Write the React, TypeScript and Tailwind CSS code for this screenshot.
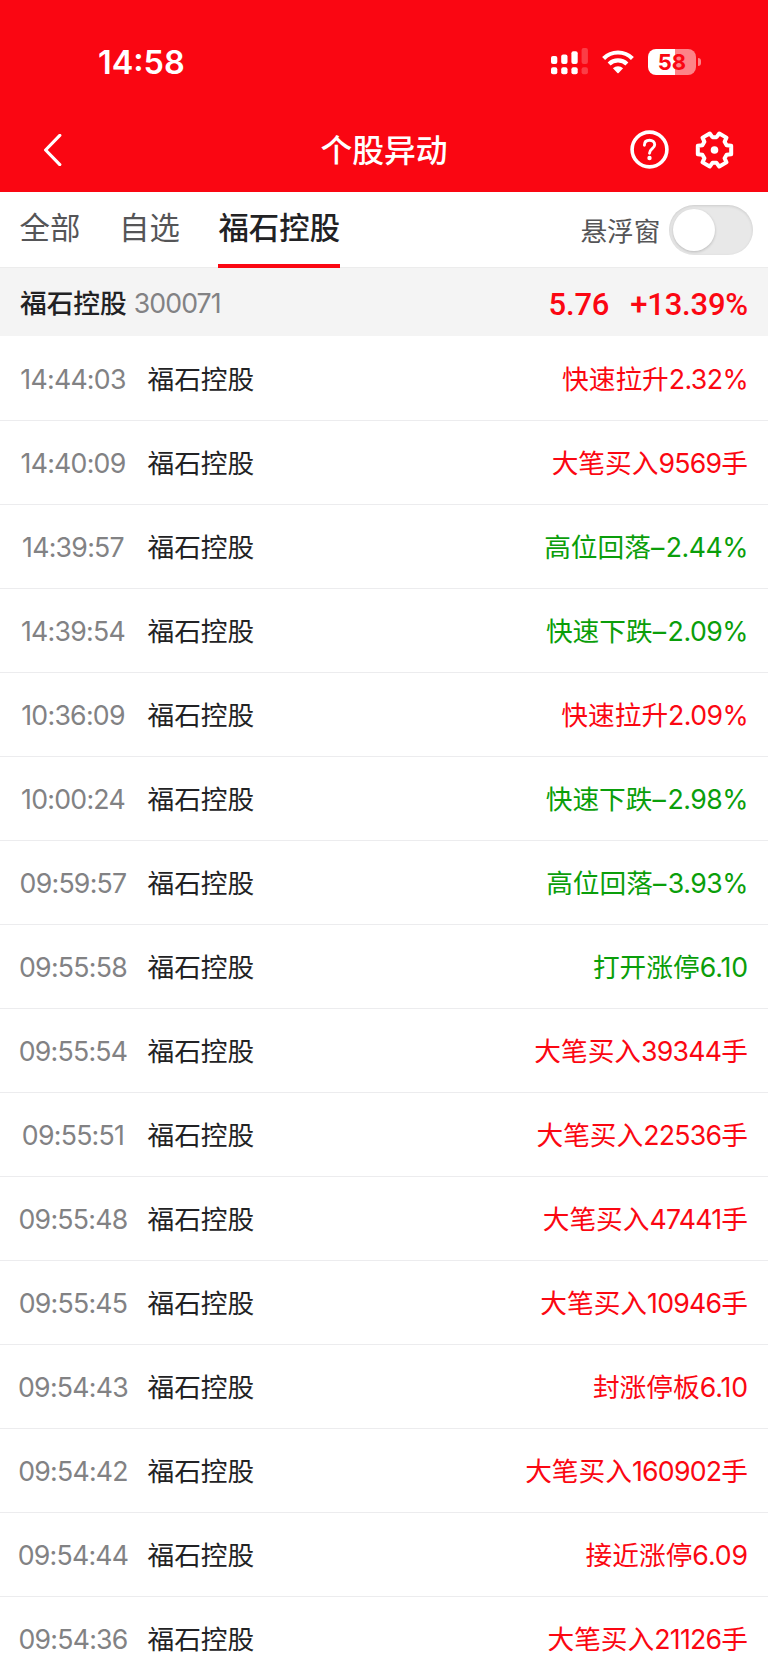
import React, { useState } from 'react';

type Trend = 'up' | 'down';

interface StockEvent {
    time: string;
    kind: string;
    value: string;
    unit?: string;
    trend: Trend;
}

const STOCK = { name: '福石控股', code: '300071', price: '5.76', change: '+13.39%' };

const EVENTS: StockEvent[] = [
    { time: '14:44:03', kind: '快速拉升', value: '2.32%', trend: 'up' },
    { time: '14:40:09', kind: '大笔买入', value: '9569', unit: '手', trend: 'up' },
    { time: '14:39:57', kind: '高位回落', value: '–2.44%', trend: 'down' },
    { time: '14:39:54', kind: '快速下跌', value: '–2.09%', trend: 'down' },
    { time: '10:36:09', kind: '快速拉升', value: '2.09%', trend: 'up' },
    { time: '10:00:24', kind: '快速下跌', value: '–2.98%', trend: 'down' },
    { time: '09:59:57', kind: '高位回落', value: '–3.93%', trend: 'down' },
    { time: '09:55:58', kind: '打开涨停', value: '6.10', trend: 'down' },
    { time: '09:55:54', kind: '大笔买入', value: '39344', unit: '手', trend: 'up' },
    { time: '09:55:51', kind: '大笔买入', value: '22536', unit: '手', trend: 'up' },
    { time: '09:55:48', kind: '大笔买入', value: '47441', unit: '手', trend: 'up' },
    { time: '09:55:45', kind: '大笔买入', value: '10946', unit: '手', trend: 'up' },
    { time: '09:54:43', kind: '封涨停板', value: '6.10', trend: 'up' },
    { time: '09:54:42', kind: '大笔买入', value: '160902', unit: '手', trend: 'up' },
    { time: '09:54:44', kind: '接近涨停', value: '6.09', trend: 'up' },
    { time: '09:54:36', kind: '大笔买入', value: '21126', unit: '手', trend: 'up' },
];

const TABS = ['全部', '自选', STOCK.name];

// Outline of the settings cog: six teeth, [radius, angle offset] around each one
const TOOTH = [[13, -21], [17.2, -14], [17.2, 14], [13, 21]];
const GEAR_POINTS = [0, 60, 120, 180, 240, 300]
    .flatMap((base) =>
        TOOTH.map(([r, offset]) => {
            const angle = ((base + offset) * Math.PI) / 180;
            return `${(19.5 + r * Math.cos(angle)).toFixed(2)},${(19 + r * Math.sin(angle)).toFixed(2)}`;
        })
    )
    .join(' ');

const SignalIcon = () => (
    <svg width="37" height="27" viewBox="0 0 37 27" fill="white">
        <rect x="0" y="8" width="6.3" height="8" rx="2" />
        <rect x="10.2" y="6.5" width="6.3" height="9.5" rx="2" />
        <rect x="20.4" y="3.2" width="6.3" height="12.8" rx="2" />
        <rect x="0" y="19.2" width="6.3" height="7" rx="2" />
        <rect x="10.2" y="19.2" width="6.3" height="7" rx="2" />
        <rect x="20.4" y="19.2" width="6.3" height="7" rx="2" />
        <g opacity="0.22">
            <rect x="30.6" y="0" width="6.3" height="16" rx="2" />
            <rect x="30.6" y="19.2" width="6.3" height="7" rx="2" />
        </g>
    </svg>
);

const WifiIcon = () => (
    <svg width="32" height="24" viewBox="0 0 32 24" fill="none" stroke="white" strokeWidth="4.2">
        <path d="M1.6 8.4 A20.5 20.5 0 0 1 30.4 8.4" />
        <path d="M7.1 14 A12.8 12.8 0 0 1 24.9 14" />
        <path d="M10.9 18.3 A7.6 7.6 0 0 1 21.1 18.3 L16.6 23 Q16 23.6 15.4 23 Z" fill="white" stroke="none" />
    </svg>
);

const BatteryIcon = () => (
    <div className="flex items-center gap-[2px]">
        <div className="flex h-[26px] w-[48px] items-center justify-center rounded-[8px] bg-linear-to-r from-white from-57% to-[#fd8388] to-57%">
            <span className="text-[22px] leading-none font-bold text-[#fa0612]">58</span>
        </div>
        <div className="h-[8px] w-[3px] rounded-r-full bg-[#fd8388]" />
    </div>
);

const HelpIcon = () => (
    <svg width="39" height="39" viewBox="0 0 39 39" fill="none" stroke="white" strokeLinecap="round">
        <circle cx="19.5" cy="19.5" r="17.4" strokeWidth="3.6" />
        <path d="M14.4 15.2 C14.4 11.8 16.6 10.2 19.5 10.2 C22.4 10.2 24.7 12 24.7 14.8 C24.7 18.6 19.5 18.8 19.5 23.2" strokeWidth="2.9" />
        <circle cx="19.5" cy="28" r="2.2" fill="white" stroke="none" />
    </svg>
);

const GearIcon = () => (
    <svg width="39" height="38" viewBox="0 0 39 38" fill="none" stroke="white" strokeWidth="4" strokeLinejoin="round">
        <polygon points={GEAR_POINTS} />
        <circle cx="19.5" cy="19" r="3.8" fill="white" stroke="none" />
    </svg>
);

const StatusBar = () => (
    <div className="flex h-[100px] items-end justify-between pr-[67px] pb-[24px] pl-[98px] text-white">
        <span className="text-[32.4px] leading-[26px] font-semibold">14:58</span>
        <div className="flex items-center gap-[14px] pb-px">
            <SignalIcon />
            <WifiIcon />
            <BatteryIcon />
        </div>
    </div>
);

const NavBar = () => (
    <div className="grid h-[92px] grid-cols-3 items-center pt-[7px] text-white">
        <button className="pl-[43px]">
            <svg width="20" height="32" viewBox="0 0 20 32" fill="none" stroke="white" strokeWidth="3.2" strokeLinecap="round" strokeLinejoin="round">
                <path d="M16.8 1.4 L2.6 16 L16.8 30.6" />
            </svg>
        </button>
        <h1 className="pt-[3px] text-center text-[31.8px] leading-none font-medium">个股异动</h1>
        <div className="flex items-center justify-end gap-[26px] pr-[34px]">
            <HelpIcon />
            <GearIcon />
        </div>
    </div>
);

const EventValue = ({ value }: { value: string }) => {
    if (value.startsWith('–')) {
        return (
            <>
                <span className="tracking-[1.6px]">–</span>
                <span className="tracking-[-0.5px]">{value.slice(1)}</span>
            </>
        );
    }
    if (value.endsWith('%')) return <span className="tracking-[-0.6px]">{value}</span>;
    return <span className={value.includes('.') ? 'tracking-[-0.1px]' : 'tracking-[-0.75px]'}>{value}</span>;
};

const EventRow = ({ event }: { event: StockEvent }) => (
    <li className="flex h-[84px] items-center border-t border-[#ececee] px-5 pt-[2px] text-[26.7px] first:border-transparent">
        <span className="flex w-[106px] justify-center tracking-[-0.75px] text-[#828284]">{event.time}</span>
        <span className="ml-[21.5px] text-[#222224]">{STOCK.name}</span>
        <span className={`ml-auto ${event.trend === 'up' ? 'text-[#fb0712]' : 'text-[#0a9e0a]'}`}>
            {event.kind}
            <EventValue value={event.value} />
            {event.unit}
        </span>
    </li>
);

const App: React.FC = () => {
    const [activeTab, setActiveTab] = useState(STOCK.name);
    const [floating, setFloating] = useState(false);

    return (
        <div className="h-[1670px] w-[768px] overflow-hidden bg-white font-['Inter','Noto_Sans_CJK_SC',sans-serif]">
            <header className="bg-[#fa0612]">
                <StatusBar />
                <NavBar />
            </header>

            {/* Tabs */}
            <div className="flex h-[76px] justify-between border-b border-[#ececec] pr-[15px] pl-[19.5px]">
                <div className="flex gap-[38.7px] text-[30.4px]">
                    {TABS.map((tab) => (
                        <button
                            key={tab}
                            onClick={() => setActiveTab(tab)}
                            className={`-mb-px flex items-center border-b-4 pt-[2px] ${tab === activeTab ? 'border-[#fb0712] font-medium text-[#222224]' : 'border-transparent text-[#555557]'}`}
                        >
                            {tab}
                        </button>
                    ))}
                </div>
                <div className="flex items-center gap-[8.5px]">
                    <span className="pt-[3px] text-[26.7px] text-[#555557]">悬浮窗</span>
                    <button
                        onClick={() => setFloating(!floating)}
                        className={`flex h-[50px] w-[84px] items-center rounded-full bg-[#e8e8e8] px-[3.5px] inset-shadow-[0_1px_3px_rgba(0,0,0,0.12)] ${floating ? 'justify-end' : 'justify-start'}`}
                    >
                        <span className="size-[42px] rounded-full bg-white shadow-[0_1px_3px_rgba(0,0,0,0.2)]" />
                    </button>
                </div>
            </div>

            {/* Stock summary */}
            <div className="flex h-[68px] items-center bg-[#f4f4f4] px-5 pt-[2px]">
                <span className="text-[26.7px] font-medium text-[#222224]">{STOCK.name}</span>
                <span className="ml-[7px] text-[26.7px] tracking-[-0.9px] text-[#828284]">{STOCK.code}</span>
                <div className="ml-auto flex gap-[21px] pt-[4px] font-['Roboto'] text-[31px] font-medium tracking-[-0.2px] text-[#fb0712]">
                    <span>{STOCK.price}</span>
                    <span>{STOCK.change}</span>
                </div>
            </div>

            <ul>
                {EVENTS.map((event) => (
                    <EventRow key={event.time} event={event} />
                ))}
            </ul>
        </div>
    );
};

export default App;
